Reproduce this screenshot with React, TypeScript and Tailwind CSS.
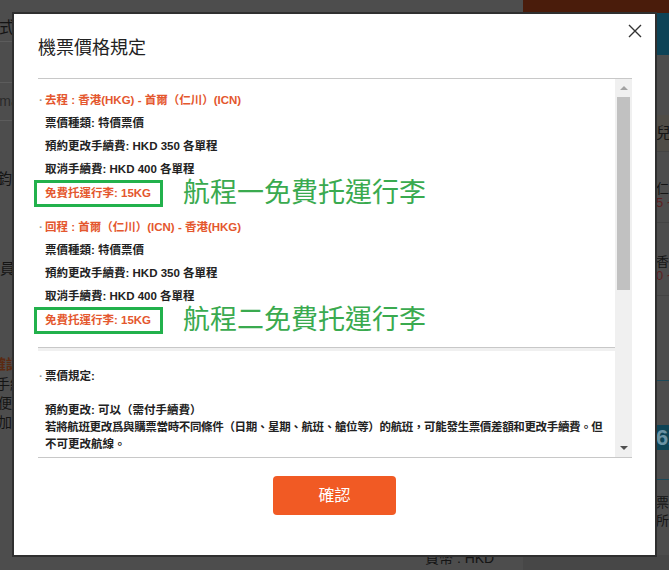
import type { ReactNode } from 'react';

const trips = [
  { head: '去程 : 香港(HKG) - 首爾（仁川）(ICN)', note: '航程一免費托運行李' },
  { head: '回程 : 首爾（仁川）(ICN) - 香港(HKG)', note: '航程二免費托運行李' },
];

function Row({ children }: { children: ReactNode }) {
  return <div className="flex h-[23px] items-center pl-[7px] text-[#222]">{children}</div>;
}

function TripBlock({ head, note, first }: { head: string; note: string; first?: boolean }) {
  return (
    <div className={first ? '' : 'mt-[9px]'}>
      <div className="flex h-[23px] items-center text-[#e4572e]">
        <span className="w-[7px] pl-[1px] text-[#999]">·</span>
        {head}
      </div>
      <Row>票價種類: 特價票價</Row>
      <Row>預約更改手續費: HKD 350 各單程</Row>
      <Row>取消手續費: HKD 400 各單程</Row>
      {/* highlighted baggage allowance */}
      <div className="-ml-[4px] mt-[-1px] flex items-center">
        <div className="flex h-[27px] w-[129px] items-center border-[3px] border-[#22b14c] pl-[8px] text-[#e4572e]">
          免費托運行李: 15KG
        </div>
        <span className="ml-[20px] text-[27px] leading-[27px] font-normal text-[#3aaa4f]">{note}</span>
      </div>
    </div>
  );
}

function Scrollbar() {
  return (
    <div className="flex w-[17px] flex-col bg-[#f0f0f0]">
      <div className="flex h-[18px] items-center justify-center">
        <div className="h-0 w-0 border-x-[4px] border-b-[4px] border-x-transparent border-b-[#a3a3a3]" />
      </div>
      <div className="mx-[2px] h-[193px] bg-[#c1c1c1]" />
      <div className="flex-1" />
      <div className="flex h-[18px] items-center justify-center">
        <div className="h-0 w-0 border-x-[4px] border-t-[4px] border-x-transparent border-t-[#505050]" />
      </div>
    </div>
  );
}

function BackgroundPage() {
  return (
    <div className="flex h-full whitespace-nowrap font-['Liberation_Sans','Noto_Sans_CJK_TC',sans-serif] text-[#141414]">
      <div className="flex flex-1 flex-col overflow-hidden bg-[#4d4d4d]">
        <div className="h-[13px]" />
        <div className="h-[29px] border-b border-[#5c5c5c] text-[16px] leading-[29px]">
          <span className="-ml-[17px]">方式</span>
        </div>
        <div className="h-[40px]" />
        <div className="h-[39px] border-y border-[#5c5c5c] text-[14px] leading-[37px] text-[#2a2a2a]">
          <span className="-ml-[10px]">Email</span>
        </div>
        <div className="h-[48px]" />
        <div className="h-[20px] text-[15px] leading-[20px]">
          <span className="-ml-[3px]">鈞</span>
        </div>
        <div className="h-[70px]" />
        <div className="h-[20px] text-[15px] leading-[20px]">員</div>
        <div className="h-[75px]" />
        <div className="h-[21px] text-[14px] font-bold leading-[21px] text-[#5a2a12]">
          <span className="-ml-[8px]">確認及</span>
        </div>
        <div className="text-[14px] leading-[19px]">
          <div className="-ml-[4px]">手續</div>
          <div className="-ml-[2px]">便</div>
          <div className="-ml-[2px]">加</div>
        </div>
        <div className="flex-1" />
        <div className="h-[24px] pl-[425px] text-[14px] leading-[24px]">貨幣 : HKD</div>
      </div>
      <div className="flex w-[146px] flex-col overflow-hidden bg-[#4d4d4d] text-[13px]">
        <div className="h-[13px] bg-[#4a1c0b]" />
        <div className="h-[42px] bg-[#0d4357]" />
        <div className="h-[60px]" />
        <div className="h-[37px] border-b border-[#444] bg-[#504d47] pl-[133px] text-[15px] leading-[36px]">兒童</div>
        <div className="h-[71px] border-b border-[#444] pl-[133px] pt-[30px] leading-[14px]">
          <div>仁川</div>
          <div className="text-[#5c1f1f]">5 ~</div>
        </div>
        <div className="h-[73px] border-b border-[#444] pl-[133px] pt-[32px] leading-[14px]">
          <div>香港</div>
          <div className="text-[#5c1f1f]">0 ~</div>
        </div>
        <div className="h-[85px] border-b border-[#1d4a5a]" />
        <div className="h-[44px]" />
        <div className="h-[25px] bg-[#0e4456] pl-[133px] text-[22px] font-bold leading-[25px] text-[#6b93a5]">62</div>
        <div className="h-[30px] border-b border-[#1d4a5a]" />
        <div className="pl-[133px] pt-[14px] leading-[18px]">
          <div>票價</div>
          <div>所須</div>
        </div>
        <div className="flex-1" />
        <div className="h-[15px] bg-[#474747]" />
      </div>
    </div>
  );
}

export default function App() {
  return (
    <div className="relative h-[570px] w-[669px] overflow-hidden bg-[#4d4d4d]">
      <BackgroundPage />

      {/* modal */}
      <div className="absolute left-[12px] top-[12px] h-[545px] w-[645px] border-2 border-[#2f2f2f] bg-white font-['Liberation_Sans','Noto_Sans_CJK_TC',sans-serif]">
        <button className="absolute left-[614px] top-[10px]">
          <svg width="14" height="14" viewBox="0 0 14 14">
            <path d="M1 1L13 13M13 1L1 13" stroke="#333" strokeWidth="1.4" />
          </svg>
        </button>

        <h2 className="pl-[24px] pt-[22px] text-[18px] leading-[24px] text-[#222]">機票價格規定</h2>

        <div className="ml-[24px] mt-[18px] flex h-[380px] w-[594px] border-y border-[#c8c8c8]">
          <div className="flex-1 text-[11.5px] font-bold">
            <div className="border-b border-[#c8c8c8] pb-[13px] pt-[10px]">
              {trips.map((t, i) => (
                <TripBlock key={t.note} head={t.head} note={t.note} first={i === 0} />
              ))}
            </div>
            <div className="h-[3px] bg-[#f0f0f0]" />
            <div className="pt-[17px] leading-[17px] text-[#222]">
              <div className="flex">
                <span className="w-[7px] pl-[1px] text-[#999]">·</span>
                票價規定:
              </div>
              <div className="h-[17px]" />
              <div className="pl-[7px]">
                <div>預約更改: 可以（需付手續費）</div>
                <div className="whitespace-nowrap tracking-[-0.35px]">
                  若將航班更改爲與購票當時不同條件（日期、星期、航班、艙位等）的航班，可能發生票價差額和更改手續費。但
                </div>
                <div>不可更改航線。</div>
              </div>
            </div>
          </div>
          <Scrollbar />
        </div>

        <div className="mt-[18px] flex justify-center">
          <button className="h-[39px] w-[123px] rounded-[4px] bg-[#f15a24] text-[16px] text-white">確認</button>
        </div>
      </div>
    </div>
  );
}
